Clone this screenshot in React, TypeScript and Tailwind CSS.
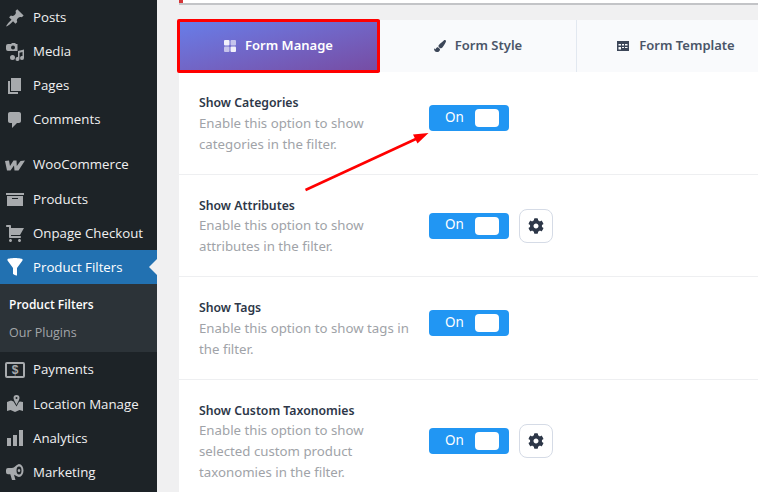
import type { ReactNode } from 'react'
import { FaCog, FaPaintBrush } from 'react-icons/fa'

/* ── Sidebar icons (drawn on a 20 box) ──────────────────────── */

const ICONS: Record<string, ReactNode> = {
  posts: <path d="M10.44 3.02l1.82-1.82 6.36 6.35-1.83 1.82c-1.05-.68-2.48-.57-3.41.36l-.75.75c-.92.93-1.04 2.35-.35 3.41l-1.83 1.82-2.41-2.41-2.8 2.79c-.42.42-3.38 2.71-3.8 2.29s1.86-3.39 2.28-3.81l2.79-2.79L4.1 9.36l1.83-1.82c1.05.69 2.48.57 3.4-.36l.75-.75c.93-.92 1.05-2.35.36-3.41z" />,
  media: <path fillRule="evenodd" d="M3 2h3l1-1h3l1 1h1.500v7H3a2 2 0 0 1-2-2V4a2 2 0 0 1 2-2zm5 1.500a2 2 0 1 0 0 4 2 2 0 0 0 0-4zM13 9l6-1.500V16a2 2 0 1 1-1.500-1.900V10l-3 .7V17a2 2 0 1 1-1.500-1.900zM7.500 13a2.500 2.500 0 0 1 0 5 2.500 2.500 0 0 1 0-5z" />,
  pages: <path d="M6 15V2h10v13H6zm-1 1h8v2H3V5h2v11z" />,
  comments: <path d="M5 2h9c1.100 0 2 .9 2 2v7c0 1.100-.9 2-2 2h-2l-5 5v-5H5c-1.100 0-2-.9-2-2V4c0-1.100.9-2 2-2z" />,
  products: <path d="M19 4v2H1V4h18zM2 7h16v10H2V7zm11 3V9H7v1h6z" />,
  cart: <path d="M6 13h9c.55 0 1 .45 1 1s-.45 1-1 1H5c-.55 0-1-.45-1-1V4H2c-.55 0-1-.45-1-1s.45-1 1-1h3c.55 0 1 .45 1 1v2h13l-4 7H6v1zm-.5 3c.83 0 1.500.67 1.500 1.500S6.330 19 5.500 19 4 18.330 4 17.500 4.670 16 5.500 16zm9 0c.83 0 1.500.67 1.500 1.500s-.67 1.500-1.500 1.500-1.500-.67-1.500-1.500.67-1.500 1.500-1.500z" />,
  filter: <path d="M2.500 3.500v-1.500s3.500-1 7.500-1 7.500 1 7.500 1v1.500l-5.500 7.500v7.500s-1.300-.1-2.300-.6S8 17 8 17v-6z" />,
  location: <path fillRule="evenodd" d="M11.500 1a3 3 0 0 1 3 3c0 1.500-1.500 3.800-2.300 5.500L11.500 11l-.7-1.500C10 7.800 8.500 5.500 8.500 4a3 3 0 0 1 3-3zm0 2a1 1 0 1 0 0 2 1 1 0 0 0 0-2zM2 8l4-1.500 2.500 1 3 5 2.500-4.500 1-.5L18 8v9l-3.500-1-4.500 2-4.500-2L2 17z" />,
  analytics: <path d="M18 18V2h-4v16h4zm-6 0V7H8v11h4zm-6 0v-8H2v8h4z" />,
  marketing: <path fillRule="evenodd" d="M14 2a4.500 6.500 0 0 1 0 13c-1 0-3-1.500-5-2.300l1.500 5.300H7L5.300 12.200H3a2 2 0 0 1-2-2V8a2 2 0 0 1 2-2h4c2.500 0 5-4 7-4zm0 2.500a2.500 4 0 1 0 0 8 2.500 4 0 0 0 0-8zm0 2.500a1.300 1.500 0 1 1 0 3 1.300 1.500 0 0 1 0-3z" />,
}

function MenuIcon({ name, active }: { name: string; active?: boolean }) {
  return (
    <svg viewBox="0 0 20 20" className={active ? 'h-5 w-5 fill-white' : 'h-5 w-5 fill-[#a7aaad]'}>
      {ICONS[name]}
    </svg>
  )
}

function WooIcon() {
  return (
    <svg viewBox="0 0 20 11" className="h-[11px] w-5 fill-[#a7aaad]">
      <path d="M0 1 4 .5 5 6 8.500 .5 11.500 .5 11.800 6 15.500 1 20 .5 13.500 10.500 9.500 10.500 9 5.500 5.500 10.500 2 10.500z" />
    </svg>
  )
}

function MoneyIcon() {
  return (
    <span className="flex h-4 w-5 items-center justify-center rounded-[2px] border-2 border-[#a7aaad] font-['Liberation_Sans',sans-serif] text-[12px] font-bold leading-none text-[#a7aaad]">
      $
    </span>
  )
}

function MenuItem({ icon, label, className = 'h-[34px]', low }: { icon: ReactNode; label: string; className?: string; low?: boolean }) {
  return (
    <div className={`flex items-center pl-[5px] text-[#f0f0f1] ${className}`}>
      <span className="flex w-5 items-center justify-center">{icon}</span>
      <span className={low ? 'ml-2 pt-0.5' : 'ml-2'}>{label}</span>
    </div>
  )
}

function Sidebar() {
  return (
    <aside className="w-[157px] shrink-0 bg-[#1d2327] pt-px font-['Open_Sans',sans-serif] text-[13.250px]">
      <MenuItem icon={<MenuIcon name="posts" />} label="Posts" />
      <MenuItem icon={<MenuIcon name="media" />} label="Media" />
      <MenuItem icon={<MenuIcon name="pages" />} label="Pages" />
      <MenuItem icon={<MenuIcon name="comments" />} label="Comments" />
      <div className="h-[11px]" />
      <MenuItem icon={<WooIcon />} label="WooCommerce" />
      <MenuItem icon={<MenuIcon name="products" />} label="Products" low />
      <MenuItem icon={<MenuIcon name="cart" />} label="Onpage Checkout" low />

      <div className="relative flex h-[34px] items-center bg-[#2271b1] pl-[5px] text-white">
        <span className="flex w-5 items-center justify-center">
          <MenuIcon name="filter" active />
        </span>
        <span className="ml-2 pt-0.5">Product Filters</span>
        <span className="absolute right-0 top-[9px] border-y-8 border-r-8 border-y-transparent border-r-[#f0f0f1]" />
      </div>
      <div className="h-[68px] bg-[#2c3338] pl-[9px] pt-[7px] leading-[28px]">
        <p className="text-[12px] font-semibold text-white">Product Filters</p>
        <p className="text-[12.500px] text-[#c3c4c7]/80">Our Plugins</p>
      </div>

      <MenuItem icon={<MoneyIcon />} label="Payments" className="h-[35px]" />
      <MenuItem icon={<MenuIcon name="location" />} label="Location Manage" low />
      <MenuItem icon={<MenuIcon name="analytics" />} label="Analytics" low />
      <MenuItem icon={<MenuIcon name="marketing" />} label="Marketing" low />
    </aside>
  )
}

/* ── Tabs ───────────────────────────────────────────────────── */

function ManageIcon() {
  return (
    <svg viewBox="0 0 12 12" className="h-3 w-3 fill-white">
      <rect x="0" y="0" width="5.500" height="5.500" rx="1" opacity="0.9" />
      <rect x="6.500" y="0" width="5.500" height="5.500" rx="1" opacity="0.6" />
      <rect x="0" y="6.500" width="5.500" height="5.500" rx="1" opacity="0.6" />
      <rect x="6.500" y="6.500" width="5.500" height="5.500" rx="1" opacity="0.9" />
    </svg>
  )
}

function TemplateIcon() {
  return (
    <svg viewBox="0 0 12 12" className="h-3 w-3 fill-[#3c4658]">
      <path fillRule="evenodd" d="M0 1h12v10H0zM1.500 4v1.500h2.500V4zm3.500 0v1.500h2V4zm3 0v1.500h2.500V4zM1.500 7v2.500h2.500V7zm3.500 0v1h2V7zm3 0v1h2.500V7z" />
    </svg>
  )
}

function Tabs() {
  return (
    <div className="flex h-[52px] bg-[#f9fafc] text-[13px] font-semibold">
      <div className="relative flex w-[201px] shrink-0 items-center justify-center gap-[9px] bg-gradient-to-br from-[#667eea] to-[#764ba2] pr-0.5 text-white">
        <ManageIcon />
        Form Manage
        <span className="absolute -inset-y-px -left-0.5 right-0 rounded-[2px] border-[3px] border-[#ff0000]" />
      </div>
      <div className="flex w-[196px] shrink-0 items-center justify-center gap-[9px] text-[#4a5568]">
        <FaPaintBrush className="h-3 w-3 text-[#3c4658]" />
        Form Style
      </div>
      <div className="flex w-[199px] shrink-0 items-center justify-center gap-2.5 border-l border-[#e2e8f0] text-[#4a5568]">
        <TemplateIcon />
        Form Template
      </div>
    </div>
  )
}

/* ── Option rows ────────────────────────────────────────────── */

const ROWS = [
  { title: 'Show Categories', desc: ['Enable this option to show', 'categories in the filter.'], gear: false, h: 'h-[103px]' },
  { title: 'Show Attributes', desc: ['Enable this option to show', 'attributes in the filter.'], gear: true, h: 'h-[102px]' },
  { title: 'Show Tags', desc: ['Enable this option to show tags in', 'the filter.'], gear: false, h: 'h-[103px]' },
  { title: 'Show Custom Taxonomies', desc: ['Enable this option to show', 'selected custom product', 'taxonomies in the filter.'], gear: true, h: 'h-[123px]' },
]

function Toggle() {
  return (
    <div className="flex h-[26px] w-20 items-center rounded-[4px] bg-[#2196f3] pl-4 text-[13.500px] text-white">
      <span className="w-[30px] pb-0.5">On</span>
      <span className="h-[18px] w-6 rounded-[4px] bg-white" />
    </div>
  )
}

function OptionRow({ row }: { row: (typeof ROWS)[number] }) {
  return (
    <div className={`flex items-center border-b border-[#eeeff1] pl-5 ${row.h}`}>
      <div className="w-[230px] shrink-0 self-start pt-[21px]">
        <p className={row.gear ? 'text-[12.250px] font-semibold leading-[19px] text-[#2d3748]' : 'text-[12.250px] font-semibold leading-[20px] text-[#2d3748]'}>{row.title}</p>
        {row.desc.map((line) => (
          <p key={line} className="text-[13.250px] leading-[21px] text-[#a0a3a8]">{line}</p>
        ))}
      </div>
      <div className={row.gear ? 'flex items-center gap-2.5' : 'mb-2.5 flex items-center gap-2.5'}>
        <Toggle />
        {row.gear && (
          <span className="flex h-[34px] w-[34px] items-center justify-center rounded-lg border border-[#d5dbe6] bg-white">
            <FaCog className="h-4 w-4 text-[#2d3748]" />
          </span>
        )}
      </div>
    </div>
  )
}

export default function App() {
  return (
    <div className="relative flex h-[492px] w-[758px] overflow-hidden bg-[#f0f0f1] font-['Noto_Sans',sans-serif]">
      <Sidebar />
      <main className="min-w-0 flex-1 pl-[22px]">
        <div className="h-[5px] border-b-2 border-[#c3c4c7] bg-white shadow-[inset_4px_0_0_#d63638]" />
        <div className="mt-[15px] bg-white">
          <Tabs />
          {ROWS.map((row) => (
            <OptionRow key={row.title} row={row} />
          ))}
        </div>
      </main>

      {/* annotation arrow */}
      <svg viewBox="0 0 758 492" className="pointer-events-none absolute inset-0 h-[492px] w-[758px]">
        <path d="M305.500 190 418 138" className="stroke-[#ff0000] stroke-[2.500]" />
        <path d="M428.500 133 413 134.500 417.500 143.500z" className="fill-[#ff0000]" />
      </svg>
    </div>
  )
}
